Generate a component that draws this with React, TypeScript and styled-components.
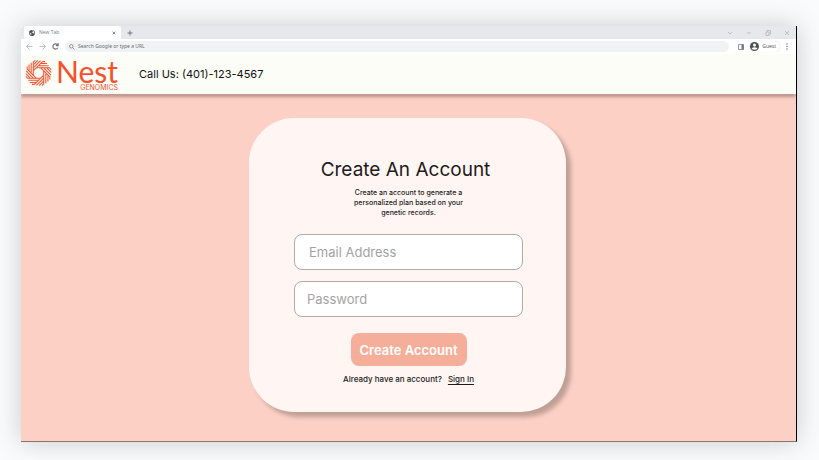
import React from "react";
import styled, { createGlobalStyle } from "styled-components";

const GlobalStyle = createGlobalStyle`
  *, *::before, *::after { box-sizing: border-box; }
  body {
    margin: 0;
    background: #fafbfd;
    font-family: Inter, "Liberation Sans", sans-serif;
    color: #231a1a;
  }
  button, input { font: inherit; }
`;

const Stage = styled.div`
  display: flex;
  min-height: 100vh;
  padding: 26px 22px 18px 21px;
`;

const BrowserWindow = styled.div`
  flex: 1;
  min-width: 0;
  display: flex;
  flex-direction: column;
  border-right: 1px solid #000;
  border-bottom: 1px solid #8c7370;
  box-shadow: 0 0 24px rgba(60, 64, 70, 0.26);
`;

const TabStrip = styled.div`
  display: flex;
  align-items: stretch;
  height: 13px;
  padding-left: 3px;
  background: #e7e8ec;
  border-radius: 3px 0 0 0;
`;

const Tab = styled.div`
  display: flex;
  align-items: center;
  gap: 4px;
  width: 97px;
  padding: 0 5px;
  background: #fff;
  border-radius: 3px 3px 0 0;
  font: 5px/13px "Open Sans", sans-serif;
  color: #777b80;
`;

const TabTitle = styled.span`
  flex: 1;
`;

const IconButton = styled.button<{ $tone?: string }>`
  display: flex;
  align-items: center;
  justify-content: center;
  padding: 0;
  border: 0;
  background: none;
  color: ${(p) => p.$tone ?? "#6f7378"};
`;

const NewTab = styled(IconButton)`
  width: 17px;
`;

const WindowControls = styled.div`
  display: flex;
  align-items: center;
  gap: 13px;
  margin-left: auto;
  padding-right: 6px;
`;

const Toolbar = styled.div`
  display: flex;
  align-items: center;
  gap: 6px;
  height: 15px;
  padding: 0 6px 0 5px;
  background: #fff;
`;

const SearchBox = styled.label`
  flex: 1;
  display: flex;
  align-items: center;
  gap: 3px;
  height: 11px;
  margin-right: 3px;
  padding: 0 4px;
  background: #f1f2f4;
  border-radius: 6px;
  color: #7b7f84;
`;

const SearchInput = styled.input`
  flex: 1;
  min-width: 0;
  height: 11px;
  padding: 0;
  border: 0;
  outline: 0;
  background: none;
  font: 5px/11px "Noto Sans", "Open Sans", sans-serif;
  &::placeholder { color: #686c71; opacity: 1; }
`;

const Profile = styled.button`
  display: flex;
  align-items: center;
  gap: 3px;
  height: 11px;
  padding: 0 4px 0 0;
  border: 0;
  border-radius: 6px;
  background: #fff;
  box-shadow: 0 0 1px #c9ccd0;
  font: 5px/11px "Open Sans", sans-serif;
  color: #4a4d51;
`;

const MenuButton = styled(IconButton)`
  margin-left: -2px;
`;

const SiteHeader = styled.header`
  position: relative;
  display: flex;
  align-items: center;
  gap: 21px;
  height: 40px;
  padding-left: 4px;
  background: #fcfdf6;
  box-shadow: 0 3px 3px #bd968c;
  clip-path: inset(0 0 -8px 0);
`;

const Brand = styled.a`
  display: flex;
  align-items: center;
  gap: 4px;
  color: #f4512c;
  text-decoration: none;
`;

const Mark = styled.svg`
  display: block;
  margin-bottom: 2px;
`;

const Wordmark = styled.span`
  display: flex;
  flex-direction: column;
  align-items: flex-end;
  padding: 1px 0;
`;

const BrandName = styled.span`
  font: 30px/28px Lato, sans-serif;
`;

const BrandField = styled.span`
  font: 7px/6px Inter, sans-serif;
`;

const Phone = styled.span`
  font-size: 11px;
  line-height: 14px;
  color: #111;
`;

const Main = styled.main`
  flex: 1;
  display: flex;
  justify-content: center;
  align-items: flex-start;
  padding: 24px 20px 29px 18px;
  background: #fcd0c5;
`;

const Card = styled.form`
  display: flex;
  flex-direction: column;
  align-items: center;
  width: 317px;
  padding: 39px 43px 27px 45px;
  border-radius: 45px;
  background: #fff6f4;
  box-shadow: 5px 5px 4px #c09f95;
`;

const Title = styled.h1`
  margin: 0;
  padding-right: 6px;
  font-size: 19px;
  font-weight: 400;
  line-height: 26px;
  white-space: nowrap;
`;

const Intro = styled.p`
  width: 124px;
  margin: 5px 0 16px;
  font-size: 7px;
  font-weight: 500;
  line-height: 10px;
  text-align: center;
`;

const Field = styled.input<{ $inset: number }>`
  width: 100%;
  height: 36px;
  margin-bottom: 11px;
  padding: 0 ${(p) => p.$inset}px;
  border: 1px solid #b3a9a9;
  border-radius: 8px;
  background: #fff;
  font-size: 13px;
  outline: 0;
  &::placeholder { color: #a3a3a3; opacity: 1; }
`;

const Submit = styled.button`
  height: 33px;
  width: 116px;
  margin-top: 5px;
  padding: 0;
  border: 0;
  border-radius: 8px;
  background: #f5ae99;
  color: #fff;
  font-size: 13px;
  font-weight: 600;
  white-space: nowrap;
`;

const SignInRow = styled.p`
  display: flex;
  gap: 6px;
  margin: 7px 0 0;
  font-size: 8px;
  font-weight: 500;
  line-height: 12px;
`;

const SignInLink = styled.a`
  color: inherit;
  text-decoration: underline;
  text-underline-offset: 2px;
`;

const blades = Array.from({ length: 8 }, (_, i) => i * 45);

const NestMark = () => (
  <Mark width="27" height="28" viewBox="-14 -14 28 28" fill="none" stroke="currentColor" aria-hidden="true">
    {blades.map((a) => (
      <path key={a} transform={`rotate(${a})`} strokeWidth="1.100" d="M-2 -5.400H11.800 M0.400 -7.600H10.600 M2.600 -9.800H8.800 M4.600 -11.800H6.800" />
    ))}
  </Mark>
);

const GlobeIcon = () => (
  <svg width="6" height="6" viewBox="0 0 12 12" aria-hidden="true">
    <circle cx="6" cy="6" r="6" fill="#4d5156" />
    <path d="M1 5l3 1 1 2-1 2C2 9 1 7 1 5zM5 1l3 1-1 2-2 1 3 1 2 2 1-2-1-3-2-2z" fill="#dfe1e4" />
  </svg>
);

type StrokeProps = { d: string; w?: number; h?: number; weight?: number };
const StrokeIcon = ({ d, w = 6, h = 6, weight = 1.6 }: StrokeProps) => (
  <svg width={w} height={h} viewBox="0 0 12 12" fill="none" stroke="currentColor" strokeWidth={weight} aria-hidden="true">
    <path d={d} />
  </svg>
);

export default function App() {
  return (
    <>
      <GlobalStyle />
      <Stage>
        <BrowserWindow>
          <TabStrip>
            <Tab>
              <GlobeIcon />
              <TabTitle>New Tab</TabTitle>
              <IconButton aria-label="Close tab"><StrokeIcon d="M2 2l8 8M10 2l-8 8" w={4} h={4} weight={2.4} /></IconButton>
            </Tab>
            <NewTab aria-label="New tab"><StrokeIcon d="M6 1v10M1 6h10" weight={2} /></NewTab>
            <WindowControls>
              <IconButton $tone="#b4b6ba" aria-label="Search tabs"><StrokeIcon d="M2 4l4 4 4-4" /></IconButton>
              <IconButton $tone="#b4b6ba" aria-label="Minimize"><StrokeIcon d="M2 6h8" /></IconButton>
              <IconButton $tone="#b4b6ba" aria-label="Restore"><StrokeIcon d="M2 4h6v7H2zM4 4V1h7v7H8" /></IconButton>
              <IconButton $tone="#b4b6ba" aria-label="Close"><StrokeIcon d="M2 2l8 8M10 2L2 10" /></IconButton>
            </WindowControls>
          </TabStrip>
          <Toolbar>
            <IconButton $tone="#b4b6ba" aria-label="Back"><StrokeIcon d="M11 6H2M6 1L1 6l5 5" w={7} h={7} /></IconButton>
            <IconButton $tone="#b4b6ba" aria-label="Forward"><StrokeIcon d="M1 6h9M6 1l5 5-5 5" w={7} h={7} /></IconButton>
            <IconButton aria-label="Reload"><StrokeIcon d="M10 8a4.500 4.500 0 1 1-.5-5M10.500 0v4.500H6.500" w={7} h={7} weight={2} /></IconButton>
            <SearchBox>
              <StrokeIcon d="M8 4.500a3.500 3.500 0 1 1-7 0a3.500 3.500 0 1 1 7 0zM7 7l4 4" />
              <SearchInput type="text" aria-label="Address" placeholder="Search Google or type a URL" />
            </SearchBox>
            <IconButton aria-label="Side panel">
              <svg width="6" height="6" viewBox="0 0 12 12" aria-hidden="true">
                <path d="M1 1h10v10H1z" fill="none" stroke="currentColor" strokeWidth="1.5" />
                <path d="M7 1h4v10H7z" fill="currentColor" />
              </svg>
            </IconButton>
            <Profile>
              <svg width="9" height="9" viewBox="0 0 18 18" aria-hidden="true">
                <circle cx="9" cy="9" r="9" fill="#4d5156" />
                <circle cx="9" cy="6" r="3" fill="#fff" />
                <path d="M3 13q6-5 12 0q-6 5-12 0z" fill="#fff" />
              </svg>
              Guest
            </Profile>
            <MenuButton aria-label="Menu">
              <svg width="6" height="7" viewBox="0 0 12 14" fill="currentColor" aria-hidden="true">
                <circle cx="6" cy="2" r="1.500" /><circle cx="6" cy="7" r="1.500" /><circle cx="6" cy="12" r="1.500" />
              </svg>
            </MenuButton>
          </Toolbar>
          <SiteHeader>
            <Brand href="#">
              <NestMark />
              <Wordmark>
                <BrandName>Nest</BrandName>
                <BrandField>GENOMICS</BrandField>
              </Wordmark>
            </Brand>
            <Phone>Call Us: (401)-123-4567</Phone>
          </SiteHeader>
          <Main>
            <Card onSubmit={(e) => e.preventDefault()}>
              <Title>Create An Account</Title>
              <Intro>Create an account to generate a personalized plan based on your genetic records.</Intro>
              <Field $inset={14} type="email" aria-label="Email Address" placeholder="Email Address" />
              <Field $inset={12} type="password" aria-label="Password" placeholder="Password" />
              <Submit type="submit">Create Account</Submit>
              <SignInRow>
                Already have an account?
                <SignInLink href="#">Sign In</SignInLink>
              </SignInRow>
            </Card>
          </Main>
        </BrowserWindow>
      </Stage>
    </>
  );
}
